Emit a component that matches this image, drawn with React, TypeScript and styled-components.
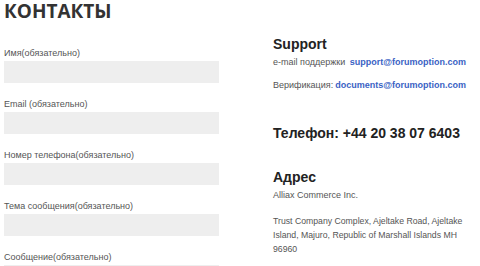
import styled, { createGlobalStyle } from "styled-components";

const GlobalStyle = createGlobalStyle`
  html, body {
    margin: 0;
    padding: 0;
    background: #ffffff;
  }
  body {
    font-family: "Liberation Sans", Arial, sans-serif;
    color: #555555;
    overflow: hidden;
  }
`;

const fields = [
  "Имя(обязательно)",
  "Email (обязательно)",
  "Номер телефона(обязательно)",
  "Тема сообщения(обязательно)",
  "Сообщение(обязательно)",
];

const App = () => {
  return (
    <Page>
      <GlobalStyle />
      <Title>КОНТАКТЫ</Title>
      <Columns>
        <FormColumn>
          {fields.map((label) => (
            <Field key={label}>
              <Label>{label}</Label>
              <Input />
            </Field>
          ))}
        </FormColumn>
        <InfoColumn>
          <Heading>Support</Heading>
          <ContactRow>
            <span>e-mail поддержки</span>
            <Link>support@forumoption.com</Link>
          </ContactRow>
          <ContactRow>
            <span>Верификация:</span>
            <Link>documents@forumoption.com</Link>
          </ContactRow>
          <Phone>Телефон: +44 20 38 07 6403</Phone>
          <Heading>Адрес</Heading>
          <Text>Alliax Commerce Inc.</Text>
          <Address>
            Trust Company Complex, Ajeltake Road, Ajeltake Island, Majuro,
            Republic of Marshall Islands MH 96960
          </Address>
        </InfoColumn>
      </Columns>
    </Page>
  );
};

const Page = styled.div`
  padding: 0 0 0 4px;
`;

const Title = styled.h1`
  margin: 0;
  font-family: "Open Sans", sans-serif;
  font-size: 19px;
  line-height: 23px;
  font-weight: 700;
  color: #333333;
`;

const Columns = styled.div`
  display: grid;
  grid-template-columns: 215px 197px;
  column-gap: 54px;
`;

const FormColumn = styled.div`
  display: flex;
  flex-direction: column;
  gap: 15px;
  padding-top: 24px;
`;

const Field = styled.div`
  display: flex;
  flex-direction: column;
  gap: 2px;
`;

const Label = styled.div`
  font-size: 9px;
  line-height: 12px;
  color: #555555;
`;

const Input = styled.div`
  height: 22px;
  background: #eeeeee;
`;

const InfoColumn = styled.div`
  display: flex;
  flex-direction: column;
  padding-top: 13px;
`;

const Heading = styled.h3`
  margin: 0 0 4px;
  font-size: 14px;
  line-height: 16px;
  font-weight: 700;
  color: #222222;
`;

const ContactRow = styled.div`
  display: flex;
  justify-content: space-between;
  font-size: 9px;
  line-height: 12px;
  margin-bottom: 11px;
  padding-right: 4px;
`;

const Link = styled.a`
  color: #3a62c4;
  font-weight: 700;
`;

const Phone = styled.div`
  margin: 23px 0 28px;
  font-size: 14px;
  line-height: 16px;
  font-weight: 700;
  color: #222222;
`;

const Text = styled.div`
  font-size: 9px;
  line-height: 12px;
`;

const Address = styled.div`
  margin-top: 13px;
  font-size: 8.7px;
  line-height: 14px;
`;

export default App;
